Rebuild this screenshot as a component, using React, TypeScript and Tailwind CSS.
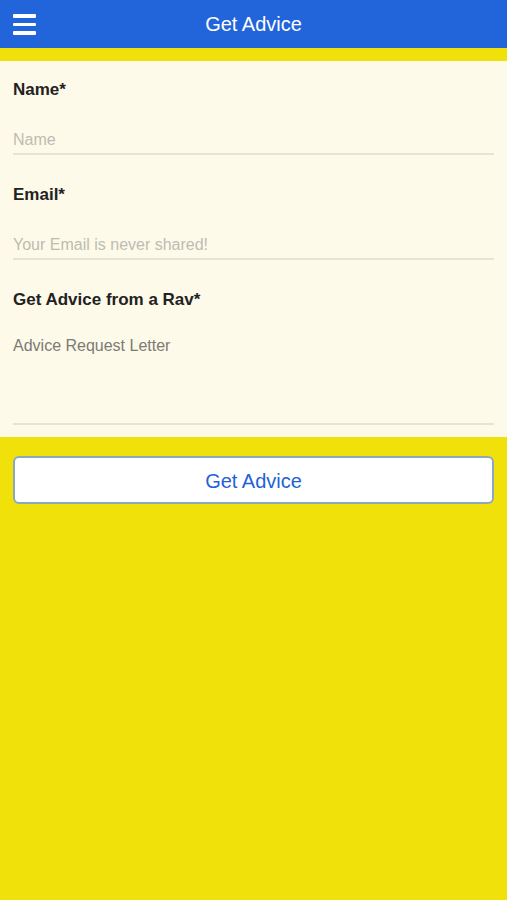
import React, { useState } from 'react';

const font = { fontFamily: '"Liberation Sans", Arial, sans-serif' };

const App: React.FC = () => {
  const [name, setName] = useState('');
  const [email, setEmail] = useState('');
  const [letter, setLetter] = useState('');

  return (
    <div className="min-h-[900px] w-full bg-[#f0e10b]" style={font}>
      {/* header */}
      <div className="relative flex h-12 items-center justify-center bg-[#2264da]">
        <button className="absolute left-[13px] top-[14px] flex w-[23px] flex-col gap-[5px]">
          <span className="block h-[3.5px] w-full rounded-[1px] bg-white" />
          <span className="block h-[3.5px] w-full rounded-[1px] bg-white" />
          <span className="block h-[3.5px] w-full rounded-[1px] bg-white" />
        </button>
        <h1 className="text-[20px] text-white">Get Advice</h1>
      </div>

      <div className="h-[13px]" />

      {/* form */}
      <div className="bg-[#fdfae9] px-[13px] pb-[12px] pt-[19px]">
        <label className="block text-[17px] font-bold leading-5 text-[#222]">Name*</label>
        <input
          value={name}
          onChange={(e) => setName(e.target.value)}
          placeholder="Name"
          className="mt-[24px] block h-[31px] w-full border-b-2 border-[#e6e4d6] bg-transparent pt-[3px] text-[16px] text-[#333] outline-none placeholder:text-[#bdbcb2]"
        />

        <label className="mt-[30px] block text-[17px] font-bold leading-5 text-[#222]">Email*</label>
        <input
          value={email}
          onChange={(e) => setEmail(e.target.value)}
          placeholder="Your Email is never shared!"
          className="mt-[24px] block h-[31px] w-full border-b-2 border-[#e6e4d6] bg-transparent pt-[3px] text-[16px] text-[#333] outline-none placeholder:text-[#bdbcb2]"
        />

        <label className="mt-[30px] block text-[17px] font-bold leading-5 text-[#222]">Get Advice from a Rav*</label>
        <textarea
          value={letter}
          onChange={(e) => setLetter(e.target.value)}
          placeholder="Advice Request Letter"
          className="mt-[25px] block h-[90px] w-full resize-none border-b-2 border-[#e6e4d6] bg-transparent pt-[1px] text-[16px] leading-5 text-[#333] outline-none placeholder:text-[#7c7b74]"
        />
      </div>

      {/* submit */}
      <div className="px-[13px] pt-[19px]">
        <button className="flex h-[48px] w-full items-center justify-center rounded-[6px] border-2 border-[#8ea6c4] bg-white pt-[2px] text-[20px] text-[#2262d6]">
          Get Advice
        </button>
      </div>
    </div>
  );
};

export default App;
